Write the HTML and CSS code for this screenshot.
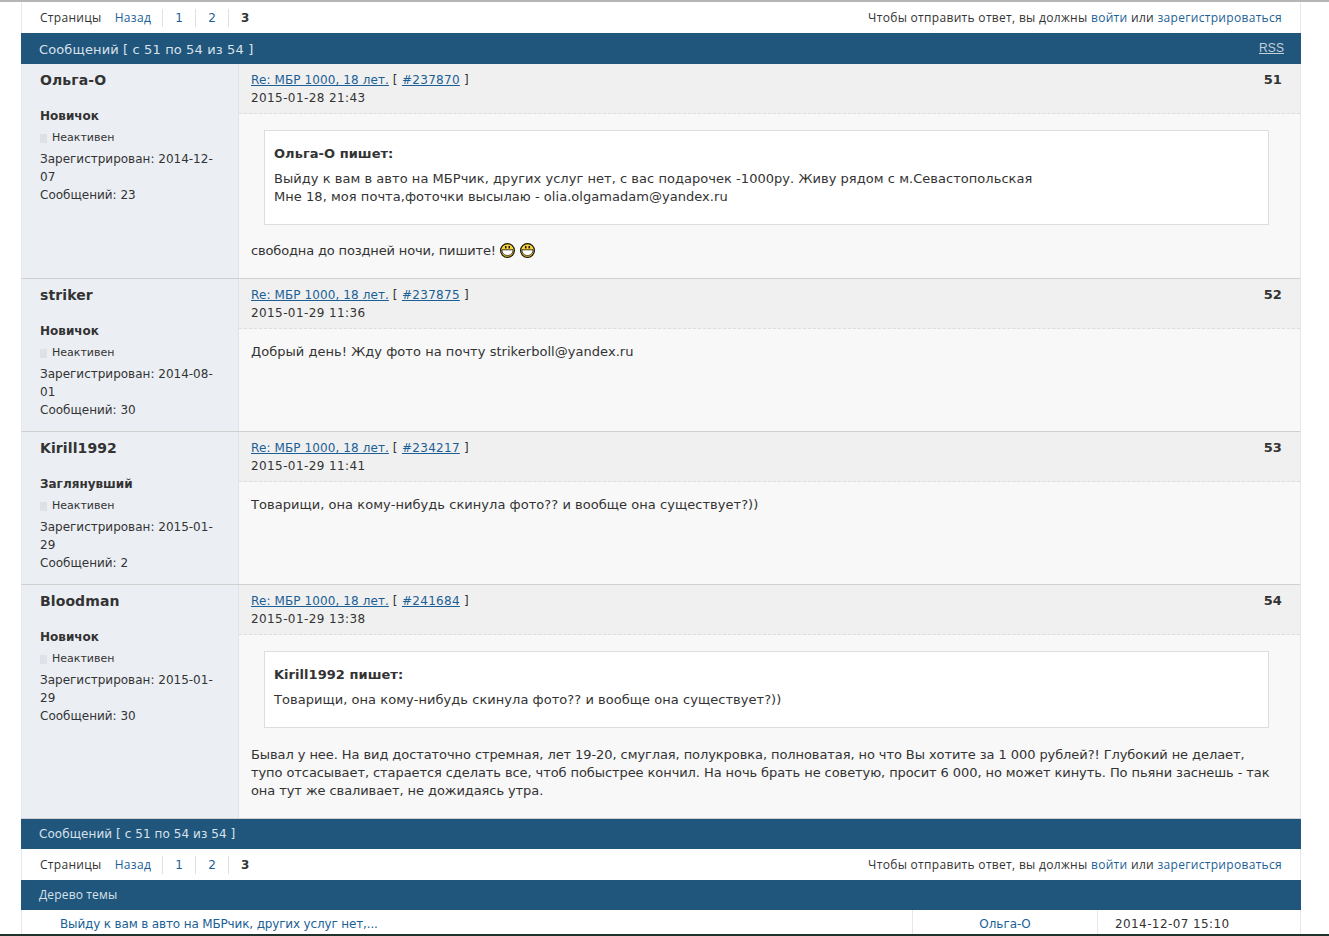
FILE: index.html
```html
<!DOCTYPE html>
<html lang="ru">
<head>
    <meta charset="UTF-8">
    <meta name="viewport" content="width=device-width, initial-scale=1.0">
    <title>МБР 1000, 18 лет</title>
    <link rel="stylesheet" href="styles.css">
</head>
<body>

<svg class="defs" width="0" height="0">
    <symbol id="grin" viewBox="0 0 15 15">
        <circle cx="7.5" cy="7.5" r="6.900" fill="#fbd238" stroke="#14120a" stroke-width="1.200"/>
        <path d="M2 6.800h11c.3 3.300-2.100 5.700-5.500 5.700s-5.800-2.400-5.500-5.700z" fill="#fff" stroke="#14120a" stroke-width=".8"/>
        <rect x="5" y="3" width="1.500" height="2.400" fill="#14120a"/>
        <rect x="8.500" y="3" width="1.500" height="2.400" fill="#14120a"/>
    </symbol>
</svg>

<div class="wrap">
    <div class="linkbar">
        <div class="pages">
            <span class="pages-label">Страницы</span>
            <a href="#" class="pg-prev">Назад</a>
            <a href="#" class="pg">1</a>
            <a href="#" class="pg">2</a>
            <b class="pg pg-current">3</b>
        </div>
        <div class="postlink">Чтобы отправить ответ, вы должны <a href="#">войти</a> или <a href="#">зарегистрироваться</a></div>
    </div>

    <div class="bar bar-top">
        <span>Сообщений [ с 51 по 54 из 54 ]</span>
        <a href="#" class="rss">RSS</a>
    </div>

    <div class="post">
        <div class="author">
            <div class="author-name">Ольга-О</div>
            <div class="author-title">Новичок</div>
            <div class="author-status"><i></i>Неактивен</div>
            <div class="author-info">Зарегистрирован: 2014-12-07<br>Сообщений: 23</div>
        </div>
        <div class="post-main">
            <div class="post-head">
                <div>
                    <a href="#">Re: МБР 1000, 18 лет.</a> <span class="post-ref">[ <a href="#">#237870</a> ]</span><br>
                    <span class="post-date">2015-01-28 21:43</span>
                </div>
                <b class="post-num">51</b>
            </div>
            <div class="post-body">
                <div class="quote">
                    <p class="quote-who">Ольга-О пишет:</p>
                    <p>Выйду к вам в авто на МБРчик, других услуг нет, с вас подарочек -1000ру. Живу рядом с м.Севастопольская<br>Мне 18, моя почта,фоточки высылаю - olia.olgamadam@yandex.ru</p>
                </div>
                <p class="msg msg-smiles">свободна до поздней ночи, пишите! <svg class="smile"><use href="#grin"/></svg> <svg class="smile"><use href="#grin"/></svg></p>
            </div>
        </div>
    </div>

    <div class="post">
        <div class="author">
            <div class="author-name">striker</div>
            <div class="author-title">Новичок</div>
            <div class="author-status"><i></i>Неактивен</div>
            <div class="author-info">Зарегистрирован: 2014-08-01<br>Сообщений: 30</div>
        </div>
        <div class="post-main">
            <div class="post-head">
                <div>
                    <a href="#">Re: МБР 1000, 18 лет.</a> <span class="post-ref">[ <a href="#">#237875</a> ]</span><br>
                    <span class="post-date">2015-01-29 11:36</span>
                </div>
                <b class="post-num">52</b>
            </div>
            <div class="post-body">
                <p class="msg">Добрый день! Жду фото на почту strikerboll@yandex.ru</p>
            </div>
        </div>
    </div>

    <div class="post">
        <div class="author">
            <div class="author-name">Kirill1992</div>
            <div class="author-title">Заглянувший</div>
            <div class="author-status"><i></i>Неактивен</div>
            <div class="author-info">Зарегистрирован: 2015-01-29<br>Сообщений: 2</div>
        </div>
        <div class="post-main">
            <div class="post-head">
                <div>
                    <a href="#">Re: МБР 1000, 18 лет.</a> <span class="post-ref">[ <a href="#">#234217</a> ]</span><br>
                    <span class="post-date">2015-01-29 11:41</span>
                </div>
                <b class="post-num">53</b>
            </div>
            <div class="post-body">
                <p class="msg">Товарищи, она кому-нибудь скинула фото?? и вообще она существует?))</p>
            </div>
        </div>
    </div>

    <div class="post">
        <div class="author">
            <div class="author-name">Bloodman</div>
            <div class="author-title">Новичок</div>
            <div class="author-status"><i></i>Неактивен</div>
            <div class="author-info">Зарегистрирован: 2015-01-29<br>Сообщений: 30</div>
        </div>
        <div class="post-main">
            <div class="post-head">
                <div>
                    <a href="#">Re: МБР 1000, 18 лет.</a> <span class="post-ref">[ <a href="#">#241684</a> ]</span><br>
                    <span class="post-date">2015-01-29 13:38</span>
                </div>
                <b class="post-num">54</b>
            </div>
            <div class="post-body">
                <div class="quote">
                    <p class="quote-who">Kirill1992 пишет:</p>
                    <p>Товарищи, она кому-нибудь скинула фото?? и вообще она существует?))</p>
                </div>
                <p class="msg msg-long">Бывал у нее. На вид достаточно стремная, лет 19-20, смуглая, полукровка, полноватая, но что Вы хотите за 1 000 рублей?! Глубокий не делает, тупо отсасывает, старается сделать все, чтоб побыстрее кончил. На ночь брать не советую, просит 6 000, но может кинуть. По пьяни заснешь - так она тут же сваливает, не дожидаясь утра.</p>
            </div>
        </div>
    </div>

    <div class="bar bar-bottom"><span>Сообщений [ с 51 по 54 из 54 ]</span></div>

    <div class="linkbar">
        <div class="pages">
            <span class="pages-label">Страницы</span>
            <a href="#" class="pg-prev">Назад</a>
            <a href="#" class="pg">1</a>
            <a href="#" class="pg">2</a>
            <b class="pg pg-current">3</b>
        </div>
        <div class="postlink">Чтобы отправить ответ, вы должны <a href="#">войти</a> или <a href="#">зарегистрироваться</a></div>
    </div>

    <div class="bar bar-tree"><span>Дерево темы</span></div>

    <div class="tree-row">
        <a href="#" class="tree-title">Выйду к вам в авто на МБРчик, других услуг нет,...</a>
        <a href="#" class="tree-user">Ольга-О</a>
        <div class="tree-date">2014-12-07 15:10</div>
    </div>
</div>

<div class="screen-edge"></div>

</body>
</html>
```

FILE: styles.css
```css
html, body {
    margin: 0;
    height: 936px;
    overflow: hidden;
}
body {
    background-color: #fff;
    border-top: 2px solid #b5b5b5;
    box-sizing: border-box;
    font-family: "DejaVu Sans", Verdana, sans-serif;
    font-size: 12px;
    line-height: 18px;
    color: #333;
}
a {
    color: #1b5f96;
}
p {
    margin: 0;
}
.defs {
    position: absolute;
}
.wrap {
    width: 1280px;
    margin-left: 21px;
}

.linkbar {
    display: flex;
    justify-content: space-between;
    align-items: center;
    height: 31px;
    padding: 0 18px;
    border-left: 1px solid #e4e9f0;
    border-right: 1px solid #e4e9f0;
    font-family: "Open Sans", "DejaVu Sans", sans-serif;
    font-size: 12px;
    letter-spacing: .31px;
}
.linkbar a {
    text-decoration: none;
}
.pages {
    display: flex;
    align-items: center;
}
.pages-label {
    margin-right: 13px;
}
.pg-prev {
    padding-right: 11px;
}
.pg {
    width: 33px;
    box-sizing: border-box;
    text-align: center;
    line-height: 18px;
    border-left: 1px solid #e0e0e0;
    font-family: "DejaVu Sans", sans-serif;
    letter-spacing: 0;
}

.bar {
    display: flex;
    justify-content: space-between;
    align-items: center;
    padding: 0 18px;
    background-color: #20557c;
    color: #d8e2ea;
    height: 31px;
    box-sizing: border-box;
}
.bar-top {
    font-size: 13px;
    letter-spacing: .13px;
    padding-top: 2px;
}
.bar-bottom {
    height: 30px;
    letter-spacing: .07px;
}
.bar-tree {
    height: 30px;
    font-family: "Open Sans", "DejaVu Sans", sans-serif;
    letter-spacing: .15px;
}
.rss {
    color: #c3d0da;
    font-family: "Liberation Sans", sans-serif;
    font-size: 12px;
    letter-spacing: .1px;
    margin: 0 -1px 4px 0;
}

.post {
    display: grid;
    grid-template-columns: 217px 1fr;
    border-left: 1px solid #e4e9f0;
    border-right: 1px solid #e4e9f0;
    border-bottom: 1px solid #d0d0d0;
}
.author {
    padding: 7px 18px 10px;
    background-color: #ebeff4;
    border-right: 1px solid #dfe4ea;
}
.author-name {
    font-weight: bold;
    font-size: 14px;
    height: 36px;
    letter-spacing: .1px;
}
.author-title {
    font-weight: bold;
    height: 21px;
}
.author-status {
    display: flex;
    align-items: center;
    font-size: 11px;
    height: 20px;
    margin-bottom: 2px;
}
.author-status i {
    width: 7px;
    height: 9px;
    margin-right: 5px;
    background-color: #dde2e8;
}

.post-main {
    display: flex;
    flex-direction: column;
    background-color: #f8f8f8;
}
.post-head {
    display: flex;
    justify-content: space-between;
    height: 50px;
    padding: 7px 18px 0 12px;
    box-sizing: border-box;
    background-color: #f0f0f0;
    border-bottom: 1px dashed #ddd;
    letter-spacing: .1px;
}
.post-ref {
    letter-spacing: .3px;
}
.post-date {
    letter-spacing: .4px;
}
.post-num {
    font-size: 13px;
}
.post-body {
    padding: 14px 31px 17px 12px;
    box-sizing: border-box;
    min-height: 102px;
    font-size: 13px;
    letter-spacing: .04px;
}
.quote {
    margin: 2px 0 18px 13px;
    padding: 14px 9px 18px;
    background-color: #fff;
    border: 1px solid #ddd;
}
.quote-who {
    font-weight: bold;
    margin-bottom: 7px;
}
.msg-smiles {
    margin: -1px 0 1px;
    letter-spacing: -.15px;
}
.msg-long {
    margin: 0 -5px 1px 0;
    letter-spacing: -.08px;
}
.smile {
    width: 15px;
    height: 15px;
    margin-right: 1px;
    vertical-align: -3px;
}

.tree-row {
    display: grid;
    grid-template-columns: 890px 185px 1fr;
    border-left: 1px solid #e4e9f0;
    border-right: 1px solid #e4e9f0;
    height: 30px;
    line-height: 28px;
}
.tree-row a {
    text-decoration: none;
}
.tree-title {
    padding-left: 38px;
    letter-spacing: -.15px;
}
.tree-user {
    text-align: center;
    border-left: 1px solid #e4e9f0;
}
.tree-date {
    padding-left: 17px;
    border-left: 1px solid #e4e9f0;
    letter-spacing: .4px;
}

.screen-edge {
    position: fixed;
    left: 0;
    right: 0;
    bottom: 0;
    height: 2px;
    background-color: #20322c;
}
```
